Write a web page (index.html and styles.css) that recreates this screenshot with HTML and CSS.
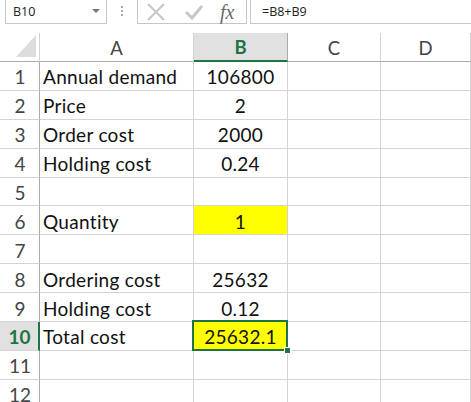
FILE: index.html
```html
<!DOCTYPE html>
<html>
<head>
<meta charset="utf-8">
<link rel="stylesheet" href="styles.css">
</head>
<body>
<div class="fbar">
  <div class="namebox"><span class="nb-text">B10</span><span class="nb-arrow"></span></div>
  <div class="sep"><i></i><i></i><i></i></div>
  <div class="tools">
    <svg class="ic-x" width="20" height="18" viewBox="0 0 20 18"><path d="M2 1 L18 17 M18 1 L2 17" stroke="#c8c8c8" stroke-width="2.2" fill="none"/></svg>
    <svg class="ic-ok" width="20" height="18" viewBox="0 0 20 18"><path d="M2 9 L8 15 L18 3" stroke="#c8c8c8" stroke-width="3" fill="none"/></svg>
    <span class="fx">fx</span>
  </div>
  <div class="formula">=B8+B9</div>
</div>
<div class="sheet">
  <div class="corner"><span class="tri"></span></div>
  <div class="ch">A</div>
  <div class="ch ch-sel">B</div>
  <div class="ch">C</div>
  <div class="ch">D</div>

  <div class="rh">1</div><div class="c">Annual demand</div><div class="c num">106800</div><div class="c"></div><div class="c"></div>
  <div class="rh">2</div><div class="c">Price</div><div class="c num">2</div><div class="c"></div><div class="c"></div>
  <div class="rh">3</div><div class="c">Order cost</div><div class="c num">2000</div><div class="c"></div><div class="c"></div>
  <div class="rh">4</div><div class="c">Holding cost</div><div class="c num">0.24</div><div class="c"></div><div class="c"></div>
  <div class="rh">5</div><div class="c"></div><div class="c num"></div><div class="c"></div><div class="c"></div>
  <div class="rh">6</div><div class="c">Quantity</div><div class="c num yellow">1</div><div class="c"></div><div class="c"></div>
  <div class="rh">7</div><div class="c"></div><div class="c num"></div><div class="c"></div><div class="c"></div>
  <div class="rh">8</div><div class="c">Ordering cost</div><div class="c num">25632</div><div class="c"></div><div class="c"></div>
  <div class="rh">9</div><div class="c">Holding cost</div><div class="c num">0.12</div><div class="c"></div><div class="c"></div>
  <div class="rh rh-sel">10</div><div class="c">Total cost</div><div class="c num yellow active">25632.1</div><div class="c"></div><div class="c"></div>
  <div class="rh">11</div><div class="c"></div><div class="c num"></div><div class="c"></div><div class="c"></div>
  <div class="rh">12</div><div class="c"></div><div class="c num"></div><div class="c"></div><div class="c"></div>
</div>
</body>
</html>
```
FILE: styles.css
```css
html, body {
  margin: 0;
  padding: 0;
  background: #ffffff;
  overflow: hidden;
}
body {
  width: 471px;
  height: 402px;
  font-family: "Lato", "Liberation Sans", sans-serif;
}
.fbar {
  height: 24px;
  display: flex;
  align-items: stretch;
  box-sizing: border-box;
}
.namebox {
  margin-left: 5px;
  width: 102px;
  box-sizing: border-box;
  border: 1px solid #c6c6c6;
  border-top: none;
  display: flex;
  align-items: center;
  justify-content: space-between;
  padding: 0 5px 1px 7px;
}
.nb-text {
  font-family: "Open Sans", sans-serif;
  font-size: 12.5px;
  color: #222;
}
.nb-arrow {
  width: 0;
  height: 0;
  border-left: 4px solid transparent;
  border-right: 4px solid transparent;
  border-top: 4px solid #777;
  margin-right: 1px;
}
.sep {
  width: 30px;
  display: flex;
  flex-direction: column;
  align-items: center;
  justify-content: center;
  gap: 2px;
  padding-bottom: 2px;
}
.sep i {
  display: block;
  width: 2px;
  height: 2px;
  background: #a8a8a8;
}
.tools {
  width: 110px;
  box-sizing: border-box;
  border: 1px solid #c6c6c6;
  border-top: none;
  display: flex;
  align-items: center;
  padding-left: 8px;
  gap: 18px;
}
.fx {
  font-family: "Liberation Serif", serif;
  font-style: italic;
  font-size: 20px;
  color: #6a6a6a;
  margin-left: -2px;
  line-height: 22px;
  height: 22px;
  padding-right: 2px;
}
.formula {
  flex: 1;
  margin-left: 3px;
  box-sizing: border-box;
  border: 1px solid #c6c6c6;
  border-top: none;
  border-right: none;
  font-family: "Open Sans", sans-serif;
  font-size: 12.5px;
  color: #222;
  padding-left: 11px;
  display: flex;
  align-items: center;
  padding-bottom: 1px;
}
.sheet {
  margin-top: 9px;
  display: grid;
  grid-template-columns: 40px 154px 94px 93px 1fr;
  grid-template-rows: 29px repeat(12, 28.9px);
}
.corner {
  box-sizing: border-box;
  border-right: 1px solid #d4d4d4;
  border-bottom: 1px solid #ababab;
  position: relative;
}
.tri {
  position: absolute;
  right: 3px;
  bottom: 4px;
  width: 0;
  height: 0;
  border-left: 20px solid transparent;
  border-bottom: 22px solid #dcdcdc;
}
.ch {
  box-sizing: border-box;
  border-right: 1px solid #d4d4d4;
  border-bottom: 1px solid #ababab;
  display: flex;
  align-items: center;
  justify-content: center;
  font-size: 18.5px;
  color: #444;
  padding-top: 2px;
}
.ch-sel {
  background: #e1e1e1;
  border-bottom: 2px solid #217346;
  border-right-color: #ababab;
  color: #217346;
  font-weight: bold;
  padding-top: 1px;
}
.rh {
  box-sizing: border-box;
  border-right: 1px solid #ababab;
  border-bottom: 1px solid #d4d4d4;
  display: flex;
  align-items: center;
  justify-content: center;
  font-size: 19px;
  color: #444;
  padding-left: 1px;
  padding-top: 2px;
}
.rh-sel {
  background: #e1e1e1;
  border-right: 2px solid #217346;
  color: #217346;
  font-weight: bold;
}
.c {
  box-sizing: border-box;
  border-right: 1px solid #d4d4d4;
  border-bottom: 1px solid #d4d4d4;
  display: flex;
  align-items: center;
  padding-left: 3px;
  padding-top: 2px;
  font-size: 19px;
  letter-spacing: 0.3px;
  color: #111;
  white-space: nowrap;
}
.num {
  justify-content: center;
  padding-left: 0;
}
.yellow {
  background: #ffff00;
}
.active {
  position: relative;
}
.active::after {
  content: "";
  position: absolute;
  left: -2px;
  top: -2px;
  right: -1px;
  bottom: -1px;
  border: 2px solid #217346;
}
.active::before {
  content: "";
  position: absolute;
  right: -4px;
  bottom: -4px;
  width: 5px;
  height: 5px;
  background: #217346;
  border: 1px solid #fff;
  z-index: 2;
}
```
